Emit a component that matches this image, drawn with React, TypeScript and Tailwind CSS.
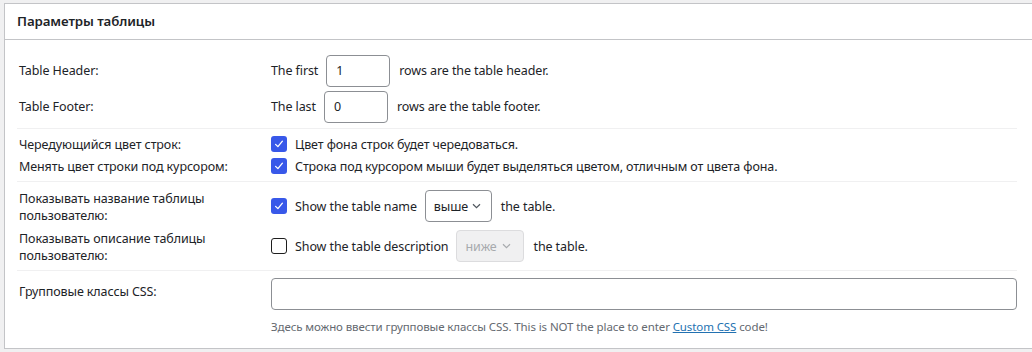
import React from "react";

const font = { fontFamily: '"Noto Sans", "Open Sans", sans-serif' };

function Check({ checked }: { checked: boolean }) {
  if (checked) {
    return (
      <span className="flex h-[16px] w-[16px] shrink-0 items-center justify-center rounded-[3px] bg-[#3858e9]">
        <svg width="12" height="12" viewBox="0 0 12 12" fill="none">
          <path d="M2.6 6.4 L4.9 8.6 L9.4 3.2" stroke="#fff" strokeWidth="1.3" strokeLinecap="round" strokeLinejoin="round" />
        </svg>
      </span>
    );
  }
  return <span className="h-[16px] w-[16px] shrink-0 rounded-[3px] border border-[#1e1e1e] bg-white" />;
}

function Chevron({ color }: { color: string }) {
  return (
    <svg width="9" height="6" viewBox="0 0 9 6" fill="none">
      <path d="M1 1.2 L4.5 4.6 L8 1.2" stroke={color} strokeWidth="1.2" />
    </svg>
  );
}

function NumInput({ v }: { v: string }) {
  return (
    <div className="flex h-[32px] w-[64px] items-center rounded-[4px] border border-[#8c8f94] bg-white px-[9px] text-[#1d2327]">
      {v}
    </div>
  );
}

export default function App() {
  return (
    <div className="min-h-[352px] w-[1032px] overflow-hidden bg-[#f0f0f1] pt-[3px]" style={font}>
      <div className="ml-[4px] w-[1060px] border border-[#c3c4c7] bg-white text-[12.5px] leading-[17px] tracking-[-0.1px] text-[#1d2327]">
        <div className="flex h-[36px] items-center border-b border-[#c3c4c7] px-[12px] pb-[1px] text-[13.3px] tracking-[-0.1px] font-semibold">
          Параметры таблицы
        </div>
        <div className="ml-[12px] w-[1000px]">
          {/* section 1 */}
          <div className="flex flex-col gap-[4px] border-b border-[#f0f0f1] pt-[14px] pb-[6px]">
            <div className="flex h-[32px] items-center pt-[1px]">
              <div className="w-[254px] pl-[2px]">Table Header:</div>
              <div className="flex items-center gap-[8px]">
                <span>The first</span>
                <NumInput v="1" />
                <span className="ml-[1px]">rows are the table header.</span>
              </div>
            </div>
            <div className="flex h-[32px] items-center pt-[1px]">
              <div className="w-[254px] pl-[2px]">Table Footer:</div>
              <div className="flex items-center gap-[8px]">
                <span>The last</span>
                <NumInput v="0" />
                <span className="ml-[1px]">rows are the table footer.</span>
              </div>
            </div>
          </div>
          {/* section 2 */}
          <div className="flex flex-col border-b border-[#f0f0f1] py-[4px]">
            <div className="flex h-[22px] items-center">
              <div className="w-[254px] pl-[2px]">Чередующийся цвет строк:</div>
              <div className="flex items-center gap-[8px]">
                <Check checked />
                <span>Цвет фона строк будет чередоваться.</span>
              </div>
            </div>
            <div className="flex h-[22px] items-center">
              <div className="w-[254px] pl-[2px]">Менять цвет строки под курсором:</div>
              <div className="flex items-center gap-[8px]">
                <Check checked />
                <span>Строка под курсором мыши будет выделяться цветом, отличным от цвета фона.</span>
              </div>
            </div>
          </div>
          {/* section 3 */}
          <div className="flex flex-col border-b border-[#f0f0f1] py-[4px]">
            <div className="flex h-[40px] items-center">
              <div className="w-[254px] pl-[2px] pt-[1px]">
                Показывать название таблицы
                <br />
                пользователю:
              </div>
              <div className="flex items-center">
                <Check checked />
                <span className="ml-[8px]">Show the table name</span>
                <div className="ml-[8px] flex h-[32px] w-[67px] items-center justify-between rounded-[4px] border border-[#8c8f94] bg-white pl-[8px] pr-[10px] text-[#1d2327]">
                  <span>выше</span>
                  <Chevron color="#50575e" />
                </div>
                <span className="ml-[9px]">the table.</span>
              </div>
            </div>
            <div className="flex h-[40px] items-center">
              <div className="w-[254px] pl-[2px] pt-[1px]">
                Показывать описание таблицы
                <br />
                пользователю:
              </div>
              <div className="flex items-center">
                <Check checked={false} />
                <span className="ml-[8px]">Show the table description</span>
                <div className="ml-[8px] flex h-[32px] w-[68px] items-center justify-between rounded-[4px] border border-[#dcdcde] bg-[#f0f0f1] pl-[8px] pr-[12px] text-[#a7aaad]">
                  <span>ниже</span>
                  <Chevron color="#a7aaad" />
                </div>
                <span className="ml-[9px]">the table.</span>
              </div>
            </div>
          </div>
          {/* section 4 */}
          <div className="flex pt-[7px] pb-[12px]">
            <div className="w-[254px] pl-[2px] pt-[5px]">Групповые классы CSS:</div>
            <div className="flex flex-1 flex-col">
              <div className="h-[32px] w-full rounded-[4px] border border-[#8c8f94] bg-white" />
              <div className="mt-[8px] text-[11.5px] leading-[18px] tracking-[-0.1px] text-[#646970]">
                Здесь можно ввести групповые классы CSS. This is NOT the place to enter{" "}
                <span className="text-[#2271b1] underline">Custom CSS</span> code!
              </div>
            </div>
          </div>
        </div>
      </div>
    </div>
  );
}
